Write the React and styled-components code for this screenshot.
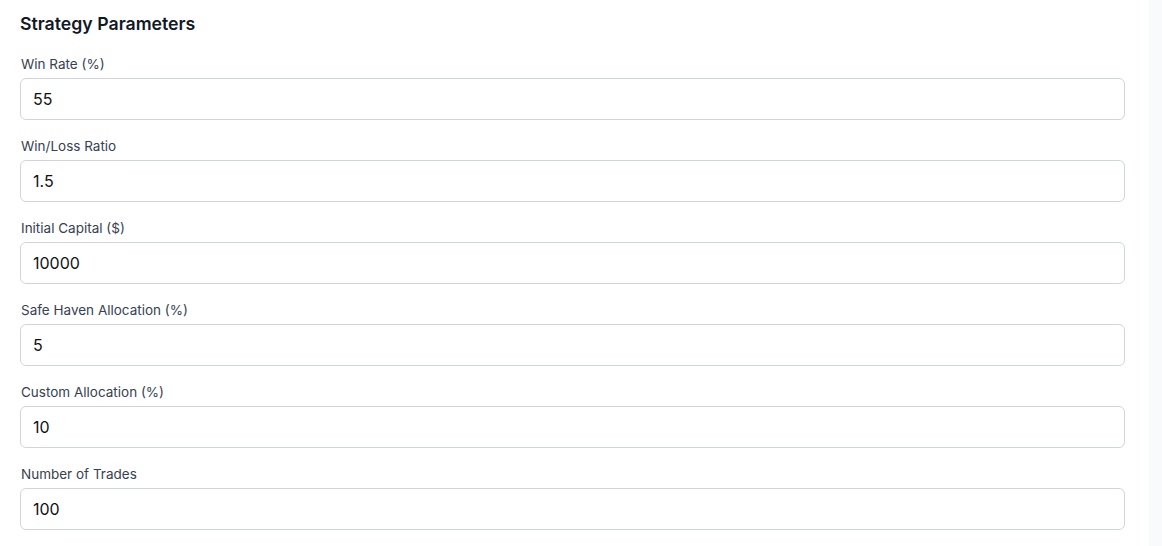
import React from 'react'
import styled, { createGlobalStyle } from 'styled-components'

const GlobalStyle = createGlobalStyle`
  html, body {
    margin: 0;
    padding: 0;
    background: #f9fafb;
    font-family: Inter, "Noto Sans", "Liberation Sans", sans-serif;
    -webkit-font-smoothing: antialiased;
  }
  * { box-sizing: border-box; }
`

const Page = styled.div`
  display: grid;
  grid-template-columns: 1149px 1fr;
  min-height: 546px;
`

const Panel = styled.section`
  background: #ffffff;
  padding: 10px 24px 20px 20px;
`

const Title = styled.h2`
  margin: 0 0 16px;
  font-size: 17.7px;
  line-height: 28px;
  font-weight: 600;
  color: #111827;
`

const Form = styled.form`
  display: flex;
  flex-direction: column;
  gap: 16px;
`

const Field = styled.div`
  display: flex;
  flex-direction: column;
  gap: 4px;
`

const Label = styled.label`
  font-size: 13.5px;
  line-height: 20px;
  color: #374151;
  padding-left: 1px;
`

const Input = styled.input`
  height: 42px;
  width: 100%;
  padding: 0 12px;
  border: 1px solid #d1d5db;
  border-radius: 6px;
  background: #fff;
  font-family: inherit;
  font-size: 16px;
  color: #111111;
  outline: none;
`

const Side = styled.div`
  background: #f9fafb;
`

const params = [
  { id: 'winRate', label: 'Win Rate (%)', value: '55' },
  { id: 'ratio', label: 'Win/Loss Ratio', value: '1.5' },
  { id: 'capital', label: 'Initial Capital ($)', value: '10000' },
  { id: 'safeHaven', label: 'Safe Haven Allocation (%)', value: '5' },
  { id: 'custom', label: 'Custom Allocation (%)', value: '10' },
  { id: 'trades', label: 'Number of Trades', value: '100' },
]

const App = () => {
  return (
    <>
      <GlobalStyle />
      <Page>
        <Panel>
          <Title>Strategy Parameters</Title>
          <Form onSubmit={(e) => e.preventDefault()}>
            {params.map((p) => (
              <Field key={p.id}>
                <Label htmlFor={p.id}>{p.label}</Label>
                <Input id={p.id} type="number" defaultValue={p.value} />
              </Field>
            ))}
          </Form>
        </Panel>
        <Side />
      </Page>
    </>
  )
}

export default App
